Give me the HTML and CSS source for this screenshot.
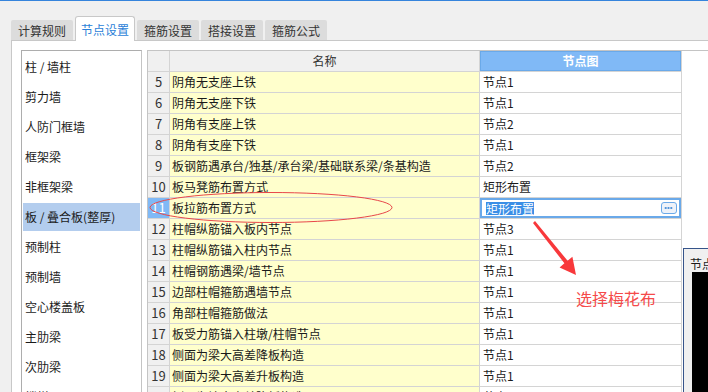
FILE: index.html
```html
<!DOCTYPE html>
<html lang="zh-CN">
<head>
    <meta charset="UTF-8">
    <title>节点设置</title>
    <link rel="stylesheet" href="styles.css">
</head>
<body>
    <div class="app">
        <div class="tabbar">
            <div class="tab">计算规则</div>
            <div class="tab active">节点设置</div>
            <div class="tab">箍筋设置</div>
            <div class="tab">搭接设置</div>
            <div class="tab">箍筋公式</div>
        </div>

        <div class="panel">
            <div class="side-list">
                <div class="side-item">柱 / 墙柱</div>
                <div class="side-item">剪力墙</div>
                <div class="side-item">人防门框墙</div>
                <div class="side-item">框架梁</div>
                <div class="side-item">非框架梁</div>
                <div class="side-item selected">板 / 叠合板(整厚)</div>
                <div class="side-item">预制柱</div>
                <div class="side-item">预制墙</div>
                <div class="side-item">空心楼盖板</div>
                <div class="side-item">主肋梁</div>
                <div class="side-item">次肋梁</div>
                <div class="side-item">楼梯</div>
            </div>

            <div class="grid-wrap">
                <div class="grid">
                    <div class="row head">
                        <div class="cell num"></div>
                        <div class="cell name">名称</div>
                        <div class="cell node">节点图</div>
                    </div>
                    <div class="row"><div class="cell num">5</div><div class="cell name">阴角无支座上铁</div><div class="cell node">节点1</div></div>
                    <div class="row"><div class="cell num">6</div><div class="cell name">阴角无支座下铁</div><div class="cell node">节点1</div></div>
                    <div class="row"><div class="cell num">7</div><div class="cell name">阴角有支座上铁</div><div class="cell node">节点2</div></div>
                    <div class="row"><div class="cell num">8</div><div class="cell name">阴角有支座下铁</div><div class="cell node">节点1</div></div>
                    <div class="row"><div class="cell num">9</div><div class="cell name">板钢筋遇承台/独基/承台梁/基础联系梁/条基构造</div><div class="cell node">节点2</div></div>
                    <div class="row"><div class="cell num">10</div><div class="cell name">板马凳筋布置方式</div><div class="cell node">矩形布置</div></div>
                    <div class="row current">
                        <div class="cell num">11</div>
                        <div class="cell name">板拉筋布置方式</div>
                        <div class="cell node editing">
                            <span class="sel-text">矩形布置</span>
                            <span class="more-btn">
                                <svg width="16" height="12" viewBox="0 0 16 12">
                                    <rect x="4" y="5" width="2" height="2" fill="#4a8fd8"/>
                                    <rect x="7" y="5" width="2" height="2" fill="#4a8fd8"/>
                                    <rect x="10" y="5" width="2" height="2" fill="#4a8fd8"/>
                                </svg>
                            </span>
                        </div>
                    </div>
                    <div class="row"><div class="cell num">12</div><div class="cell name">柱帽纵筋锚入板内节点</div><div class="cell node">节点3</div></div>
                    <div class="row"><div class="cell num">13</div><div class="cell name">柱帽纵筋锚入柱内节点</div><div class="cell node">节点1</div></div>
                    <div class="row"><div class="cell num">14</div><div class="cell name">柱帽钢筋遇梁/墙节点</div><div class="cell node">节点1</div></div>
                    <div class="row"><div class="cell num">15</div><div class="cell name">边部柱帽箍筋遇墙节点</div><div class="cell node">节点1</div></div>
                    <div class="row"><div class="cell num">16</div><div class="cell name">角部柱帽箍筋做法</div><div class="cell node">节点1</div></div>
                    <div class="row"><div class="cell num">17</div><div class="cell name">板受力筋锚入柱墩/柱帽节点</div><div class="cell node">节点1</div></div>
                    <div class="row"><div class="cell num">18</div><div class="cell name">侧面为梁大高差降板构造</div><div class="cell node">节点1</div></div>
                    <div class="row"><div class="cell num">19</div><div class="cell name">侧面为梁大高差升板构造</div><div class="cell node">节点1</div></div>
                    <div class="row"><div class="cell num">20</div><div class="cell name">侧面为墙大高差降板构造</div><div class="cell node">节点1</div></div>
                </div>
            </div>
        </div>

        <!-- preview window peeking in from the right -->
        <div class="preview">
            <div class="preview-title">节点图</div>
            <div class="preview-img"></div>
        </div>

        <!-- red annotation marks -->
        <svg class="marks" width="708" height="392" viewBox="0 0 708 392">
            <ellipse cx="271" cy="206.5" rx="121" ry="15" fill="none" stroke="#e8474a" stroke-width="1"/>
            <polygon points="533,222 535,220 567.6,259.8 572.4,255.8 576,274 559.6,266.4 564.4,262.2" fill="#f8383b"/>
        </svg>
        <div class="note">选择梅花布</div>
    </div>
</body>
</html>
```

FILE: styles.css
```css
body {
    margin: 0;
    padding: 0;
    font-family: "Noto Sans CJK SC", "Noto Sans", sans-serif;
    font-size: 12px;
    color: #1a1a1a;
}

.app {
    position: relative;
    width: 708px;
    height: 392px;
    overflow: hidden;
    background: #f0f0f0;
    border-top: 1px solid #3584dc;
    box-sizing: border-box;
    display: flex;
    flex-direction: column;
}

/* Tabs */
.tabbar {
    height: 39px;
    flex-shrink: 0;
    display: flex;
    align-items: flex-end;
    gap: 2px;
    padding-left: 11px;
}

.tab {
    height: 20px;
    line-height: 21px;
    padding: 0 7px;
    background: #dcdcdc;
    color: #333;
    border-radius: 2px 2px 0 0;
}

.tab.active {
    position: relative;
    z-index: 1;
    height: 24px;
    line-height: 25px;
    margin-bottom: -1px;
    padding: 0 5px;
    background: #fff;
    color: #2b7fd8;
    border: 1px solid #c8c8c8;
    border-bottom: none;
    border-radius: 3px 3px 0 0;
}

/* Content panel */
.panel {
    flex: 1;
    display: flex;
    align-items: flex-start;
    margin-left: 11px;
    padding: 9px 0 0 9px;
    background: #fff;
    border-top: 1px solid #c8c8c8;
    border-left: 1px solid #c8c8c8;
}

.side-list {
    width: 121px;
    height: 400px;
    flex-shrink: 0;
    box-sizing: border-box;
    padding: 2px 1px;
    border: 1px solid #adadad;
    border-right-color: #c4c4c4;
}

.side-item {
    height: 28px;
    line-height: 28px;
    margin-bottom: 2px;
    padding-left: 2px;
    white-space: nowrap;
}

.side-item.selected {
    background: #b3cdee;
}

.grid-wrap {
    flex: 1;
    height: 400px;
    margin-left: 5px;
    border-top: 1px solid #c4c4c4;
    border-left: 1px solid #c4c4c4;
}

.row {
    display: grid;
    grid-template-columns: 22px 310px 202px;
}

.cell {
    box-sizing: border-box;
    height: 21px;
    line-height: 20px;
    border-right: 1px solid #d4d4d4;
    border-bottom: 1px solid #d4d4d4;
    white-space: nowrap;
    overflow: hidden;
}

.cell.num {
    background: #f0f0f0;
    text-align: center;
    font-size: 13px;
    color: #333;
}

.cell.name {
    background: #ffffcc;
    padding-left: 2px;
}

.cell.node {
    background: #fff;
    padding-left: 3px;
}

.head .cell {
    background: #f0f0f0;
    text-align: center;
    padding-left: 0;
    color: #333;
}

.head .cell.node {
    background: #80b9f6;
    color: #fff;
    font-weight: bold;
    box-shadow: inset 0 0 0 1px #6aa9e9;
}

.current .cell.num {
    background: #80b9f6;
    color: #fff;
}

.cell.node.editing {
    display: flex;
    align-items: center;
    justify-content: space-between;
    padding: 0 4px 0 6px;
    box-shadow: inset 0 0 0 2px #6aa9e9;
}

.sel-text {
    background: #3a8ee6;
    color: #fff;
    line-height: 13px;
}

.more-btn {
    display: flex;
    width: 16px;
    height: 12px;
    box-sizing: border-box;
    background: #eef2f9;
    border: 1px solid #6aa9e9;
    border-radius: 3px;
    overflow: hidden;
}

.more-btn svg {
    margin: -1px 0 0 -1px;
}

/* Preview window at the right edge */
.preview {
    position: absolute;
    left: 683px;
    top: 247px;
    width: 60px;
    height: 160px;
    background: #f0f0f0;
    border: 1px solid #36548a;
    padding: 7px 0 0 6px;
    box-sizing: border-box;
}

.preview-title {
    line-height: 15px;
    white-space: nowrap;
}

.preview-img {
    margin: 1px 0 0 2px;
    height: 140px;
    background: #000;
}

/* Annotation */
.marks {
    position: absolute;
    left: 0;
    top: 0;
    pointer-events: none;
}

.note {
    position: absolute;
    left: 576px;
    top: 286px;
    font-size: 16px;
    line-height: 22px;
    color: #f54a4a;
    white-space: nowrap;
}
```
